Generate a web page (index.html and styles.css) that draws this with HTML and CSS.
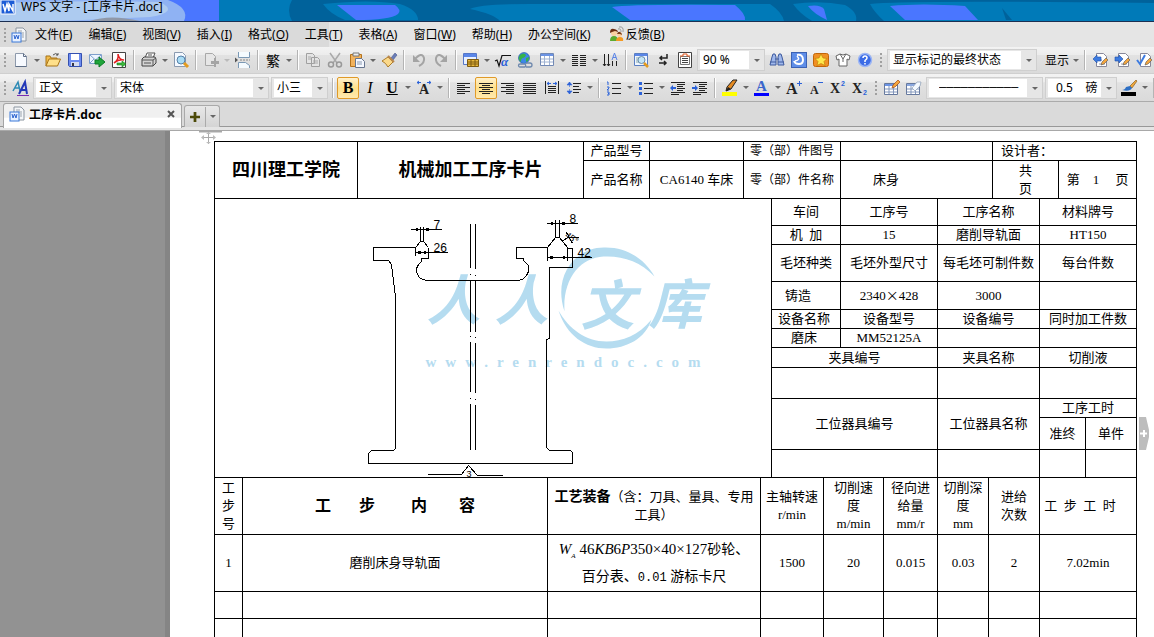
FILE: index.html
```
<!DOCTYPE html>
<html lang="zh-CN">
<head>
    <meta charset="UTF-8">
    <meta name="viewport" content="width=device-width, initial-scale=1.0">
    <title>WPS 文字 - [工序卡片.doc]</title>
    <link rel="stylesheet" href="styles.css">
</head>
<body>
    <header class="titlebar">
        <svg class="titlebar-bg" viewBox="0 0 1154 21" preserveAspectRatio="none" aria-hidden="true">
            <rect width="1154" height="21" fill="#00629b"/>
            <path d="M215 0H292Q286 10 292 21H215z" fill="#007ab8"/>
            <path d="M0 0H219V21H0z" fill="#4a76ff"/>
            <path d="M0 0H168Q190 8 184 21H0z" fill="#8fb2f3"/>
            <path d="M0 3Q80 0 160 2Q180 12 150 17L60 21H0z" fill="#adcbf0"/>
            <path d="M90 21Q110 14 140 21z" fill="#8f98a8"/>
            <path d="M323 4Q370 -1 400 4Q418 10 418 20H345Q330 14 323 4z" fill="#007ab8"/>
            <path d="M337 5H395Q402 10 398 14Q390 20 356 20Z" fill="#4a76ff"/>
            <path d="M470 9Q480 4 530 4H770Q782 12 784 21H500Q494 14 470 9z" fill="#007ab8"/>
            <path d="M612 7Q630 4 735 5Q746 14 745 20H630z" fill="#4a76ff"/>
            <path d="M793 4Q820 0 845 5Q858 12 856 21H812Q800 14 793 4z" fill="#007ab8"/>
            <path d="M808 6Q820 4 824 9L827 20Q814 14 808 6z" fill="#4a76ff"/>
            <path d="M870 4Q900 0 1154 3V21H884Q874 12 870 4z" fill="#007ab8"/>
            <path d="M890 6Q920 3 965 6L978 20H905z" fill="#4a76ff"/>
            <path d="M1002 8L1012 20H1006z" fill="#00629b"/>
        </svg>
        <svg class="icon" viewBox="0 0 16 16" aria-hidden="true"><rect x="1" width="14" height="14" fill="#1c5cd6" stroke="#fff"/><path d="M3 4l2 7 2-7 2 7V4l4 7V4" fill="none" stroke="#fff" stroke-width="1.5"/></svg>
        <h1 class="title">WPS 文字 - [工序卡片.doc]</h1>
    </header>

    <nav class="menubar">
        <span class="grip"></span>
        <svg class="icon menu-doc" viewBox="0 0 16 16" aria-hidden="true"><path d="M5 1h7l3 3v10H5z" fill="#f4f6f8" stroke="#8b95a0"/><path d="M7 4h4M7 6h6M11 8h2M11 10h2" stroke="#9aa3ad"/><rect x="1" y="6" width="9" height="9" fill="#e8f1ff" stroke="#3b78d8"/><path d="M3 8l1 4 1.500-4 1.500 4 1-4" fill="none" stroke="#2a62cf"/></svg>
        <button class="menu" type="button">文件(<u>F</u>)</button>
        <button class="menu" type="button">编辑(<u>E</u>)</button>
        <button class="menu" type="button">视图(<u>V</u>)</button>
        <button class="menu" type="button">插入(<u>I</u>)</button>
        <button class="menu" type="button">格式(<u>O</u>)</button>
        <button class="menu" type="button">工具(<u>T</u>)</button>
        <button class="menu" type="button">表格(<u>A</u>)</button>
        <button class="menu" type="button">窗口(<u>W</u>)</button>
        <button class="menu" type="button">帮助(<u>H</u>)</button>
        <button class="menu" type="button">办公空间(<u>K</u>)</button>
        <button class="menu menu-icon" type="button">
            <svg class="icon" viewBox="0 0 16 16" aria-hidden="true"><path d="M9 3q3-1 3 3M10 1q5-1 4 5" fill="none" stroke="#999"/><path d="M1 15q0-5 4-5t4 5z" fill="#5cab2f"/><circle cx="5" cy="7" r="3" fill="#fbd0a0"/><path d="M1 7q0-5 4-4t4 3l-3-1-3 1z" fill="#6b2d12"/><path d="M7 15q0-4 4-4t3 4z" fill="#f49a22"/><circle cx="10.500" cy="8.500" r="2.500" fill="#fbd0a0"/><path d="M8 8q1-3 3-2t2 3l-2-1z" fill="#7a3b18"/></svg>
            <span>反馈(<u>B</u>)</span>
        </button>
    </nav>

    <div class="toolbar">
        <span class="grip"></span>
        <button class="tool" type="button" aria-label="新建"><svg class="icon" viewBox="0 0 16 16"><path d="M2.500 1.500h8l3 3v10h-11z" fill="#f7faff" stroke="#8d99ab"/><path d="M10.500 1.500v3h3M13.500 14.500h-11" fill="none" stroke="#5f6e86"/></svg></button><button class="drop" type="button" aria-label="新建选项"></button>
        <button class="tool" type="button" aria-label="打开"><svg class="icon" viewBox="0 0 16 16"><path d="M1 14V4h4l1 2h6v3" fill="#f2bd4c" stroke="#a87418"/><path d="M1 14l3-7h11.500l-3 7z" fill="#ffe08a" stroke="#a87418"/><path d="M8 3q3-3 5 0m0 0V1m0 2h-2" fill="none" stroke="#555"/></svg></button>
        <button class="tool" type="button" aria-label="保存"><svg class="icon" viewBox="0 0 16 16"><path d="M1.500 1.500h13v13h-12l-1-1z" fill="#6d8cf0" stroke="#3450b0"/><path d="M4 2h8v6H4z" fill="#fff"/><path d="M4 10h8v4H4z" fill="#d5dcef"/><path d="M5 11h2v3H5z" fill="#334"/></svg></button>
        <button class="tool" type="button" aria-label="发送"><svg class="icon" viewBox="0 0 16 16"><path d="M.5 2.500h12v9H.5z" fill="#eef5ff" stroke="#7fa0cc"/><path d="M1 3l5.500 5L12 3M1 11l4-4" fill="none" stroke="#7fa0cc"/><path d="M6 8h4V5l6 5-6 5v-3H6z" fill="#1fa53a" stroke="#0c7a26"/></svg></button>
        <button class="tool" type="button" aria-label="输出为PDF"><svg class="icon" viewBox="0 0 16 16"><path d="M1.500.5h13v15h-13z" fill="#fff" stroke="#444"/><path d="M3 11q5-3 4-9 1 6 6 6-5-1-10 3" fill="none" stroke="#e02020" stroke-width="1.500"/><path d="M6 11h5V9l4 3-4 3v-2H6z" fill="#3cba3c" stroke="#147a1c" stroke-width=".6"/></svg></button>
        <span class="sep"></span>
        <button class="tool" type="button" aria-label="打印"><svg class="icon" viewBox="0 0 16 16"><path d="M4 6l2-5h8l-2 5z" fill="#fff" stroke="#555"/><path d="M1 7l2-2h11l1 2v4l-3 3H1z" fill="#d4d4d4" stroke="#444"/><path d="M1 8h11v6M12 8l3-2M3 11h7M7 3h4" fill="none" stroke="#555"/></svg></button><button class="drop" type="button" aria-label="打印选项"></button>
        <button class="tool" type="button" aria-label="打印预览"><svg class="icon" viewBox="0 0 16 16"><path d="M1.500.5h8l3 3v11h-11z" fill="#f5f9ff" stroke="#8a9ab0"/><circle cx="8" cy="8" r="4" fill="#a9dcf5" stroke="#5580a8"/><path d="M11 11l4 4" stroke="#e39b1f" stroke-width="3"/></svg></button>
        <span class="sep"></span>
        <button class="tool" type="button" aria-label="插入"><svg class="icon" viewBox="0 0 16 16"><path d="M2.500 1.500h7l3 3v9h-10z" fill="#e6e6e6" stroke="#a8a8a8"/><path d="M8 9h3V6h2v3h3v3h-3v3h-2v-3H8z" fill="#a5a5a5"/></svg></button><button class="drop dim-drop" type="button" aria-label="插入选项"></button>
        <button class="tool" type="button" aria-label="分页符"><svg class="icon" viewBox="0 0 16 16"><path d="M3.500 0v5.500h11V0M3.500 16v-5.500h7l4 3V16" fill="#f5fbff" stroke="#7b99b5"/><path d="M0 5.500v5l3-2.500z" fill="#555"/><path d="M5 8h10" stroke="#888" stroke-dasharray="2 1"/></svg></button>
        <span class="sep"></span>
        <button class="tool glyph" type="button">繁</button><button class="drop" type="button" aria-label="繁简转换选项"></button>
        <span class="sep"></span>
        <button class="tool" type="button" aria-label="复制"><svg class="icon" viewBox="0 0 16 16"><path d="M1.500 1.500h6l2 2v8h-8zM6.500 5.500h6l2 2v7h-8z" fill="#e4e4e4" stroke="#a0a0a0"/><path d="M3 5h3M3 7h3M8 9h5M8 11h5" stroke="#aaa"/></svg></button>
        <button class="tool" type="button" aria-label="剪切"><svg class="icon" viewBox="0 0 16 16"><path d="M3 1l7 10M13 1L6 11" stroke="#aaa" stroke-width="1.500"/><circle cx="4" cy="12.500" r="2.500" fill="none" stroke="#999" stroke-width="1.500"/><circle cx="12" cy="12.500" r="2.500" fill="none" stroke="#999" stroke-width="1.500"/></svg></button>
        <button class="tool" type="button" aria-label="粘贴"><svg class="icon" viewBox="0 0 16 16"><path d="M1.500 2.500h11v12h-11z" fill="#f2b25c" stroke="#b4731c"/><path d="M4 1h6v3H4z" fill="#eee" stroke="#777"/><path d="M6.500 6.500h6l3 3v6h-9z" fill="#f5f8ff" stroke="#66758e"/><path d="M8 10h5M8 12h5" stroke="#8899b0"/></svg></button><button class="drop" type="button" aria-label="粘贴选项"></button>
        <button class="tool" type="button" aria-label="格式刷"><svg class="icon" viewBox="0 0 16 16"><path d="M10 6l4-5 2 2-4 5z" fill="#6a7db8" stroke="#49588c" stroke-width=".6"/><path d="M1 9l6-4 5 5-5 5q-2-4-6-6z" fill="#fbd98a" stroke="#ad7c29"/><path d="M7 4l6 6" stroke="#b9874c" stroke-width="2"/></svg></button>
        <span class="sep"></span>
        <button class="tool" type="button" aria-label="撤消"><svg class="icon" viewBox="0 0 16 16"><path d="M3 8q8-9 10-2 1 5-5 8" fill="none" stroke="#a4a4a4" stroke-width="2"/><path d="M2 3v7h7z" fill="#a4a4a4"/></svg></button>
        <button class="tool" type="button" aria-label="恢复"><svg class="icon" viewBox="0 0 16 16"><path d="M13 8Q5-1 3 6q-1 5 5 8" fill="none" stroke="#a4a4a4" stroke-width="2"/><path d="M14 3v7H7z" fill="#a4a4a4"/></svg></button>
        <span class="sep"></span>
        <button class="tool" type="button" aria-label="表格和边框"><svg class="icon" viewBox="0 0 16 16"><path d="M.5 1.500h13v11H.5z" fill="#e8f0ff" stroke="#5577c8"/><path d="M1 2h12v3H1z" fill="#5a86e8"/><path d="M4.500 7.500h11v7h-11z" fill="#e8b93c" stroke="#7c5a10"/><path d="M5 10h10M5 12h10M8 8v6M12 8v6" stroke="#7c5a10"/></svg></button><button class="drop" type="button" aria-label="边框选项"></button>
        <button class="tool" type="button" aria-label="公式"><svg class="icon" viewBox="0 0 16 16"><path d="M0 9l2-1 2 6L7 3.500h9" fill="none" stroke="#111" stroke-width="1.200"/><text class="svg-alpha" x="6" y="14">α</text></svg></button>
        <button class="tool" type="button" aria-label="超链接"><svg class="icon" viewBox="0 0 16 16"><circle cx="7" cy="6" r="5.500" fill="#3c87e8" stroke="#1c4f9c" stroke-width=".6"/><path d="M3 3q4-3 6 0-1 3-3 3t-2 4Q0 7 3 3zM9 6l3-1q0 4-3 5z" fill="#35b24a"/><path d="M3 12h5a2 2 0 010 3H3a1.500 1.500 0 010-3zM9 11h4a2 2 0 010 4H9" fill="none" stroke="#6e88ad" stroke-width="1.300"/></svg></button>
        <button class="tool" type="button" aria-label="插入表格"><svg class="icon" viewBox="0 0 16 16"><path d="M1.500 1.500h13v12h-13z" fill="#fff" stroke="#7289b5"/><path d="M2 2h12v2H2z" fill="#6b93e4"/><path d="M2 7h12M2 10h12M5.500 4v9M10.500 4v9" stroke="#9fb2d2"/></svg></button><button class="drop" type="button" aria-label="插入表格选项"></button>
        <button class="tool" type="button" aria-label="分栏"><svg class="icon" viewBox="0 0 16 16"><path d="M1 3.500h6M1 5.500h6M1 7.500h6M1 9.500h6M1 11.500h6M1 13.500h6M9 3.500h6M9 5.500h6M9 7.500h6M9 9.500h6M9 11.500h6M9 13.500h6" stroke="#222"/></svg></button><button class="drop" type="button" aria-label="分栏选项"></button>
        <button class="tool" type="button" aria-label="文字方向"><svg class="icon" viewBox="0 0 16 16"><path d="M1.500 2v12M5.500 2v12M9.500 9v5M13.500 9v5M0 12l1.500 2L3 12M4 12l1.500 2L7 12" fill="none" stroke="#222"/><path d="M9 8l2.500-7L14 8M10 5.500h3" fill="none" stroke="#5a84e8"/></svg></button>
        <span class="sep"></span>
        <button class="tool" type="button" aria-label="阅读"><svg class="icon" viewBox="0 0 16 16"><path d="M1.500 1.500h13v12h-13z" fill="#f0f6ff" stroke="#5b7fc2"/><path d="M2 2h12v2H2z" fill="#5a86e8"/><path d="M3 6h4M3 8h3M3 10h4" stroke="#8aa"/><circle cx="8.500" cy="8" r="3.500" fill="#c5e6f7" stroke="#6b8cab"/><path d="M11 11l4 4" stroke="#e39b1f" stroke-width="2.500"/></svg></button>
        <button class="tool" type="button" aria-label="显示编辑标记"><svg class="icon" viewBox="0 0 16 16"><path d="M12 2v4H5m2-2L5 6l2 2M4 11h7m-2-2l2 2-2 2" fill="none" stroke="#222" stroke-width="1.500"/></svg></button>
        <button class="tool" type="button" aria-label="页面视图"><svg class="icon" viewBox="0 0 16 16"><path d="M1.500.5h13v15h-13z" fill="#fff" stroke="#444"/><path d="M3.500 4.500h9v8h-9z" fill="none" stroke="#777"/><path d="M5 6.500h6M5 8.500h6M5 10.500h6" stroke="#444"/><path d="M3 4h3V2h4v2h3" fill="none" stroke="#e0571c"/></svg></button>
        <span class="combo combo-zoom"><select aria-label="显示比例"><option>90 %</option><option>100 %</option></select></span>
        <button class="tool" type="button" aria-label="查找"><svg class="icon" viewBox="0 0 16 16"><path d="M1 13l2-8 1-3h2l1 3v8zM9 13V5l1-3h2l1 3 2 8z" fill="#9fb8ec" stroke="#3f5b9e"/><path d="M6 7h4M1 10h6M9 10h6" stroke="#3f5b9e"/></svg></button>
        <button class="tool" type="button" aria-label="在线素材"><svg class="icon" viewBox="0 0 16 16"><rect x=".5" y=".5" width="15" height="15" fill="#5f8ee8" stroke="#3c62b4"/><path d="M6 3q6-1 6 5 0 4-4 4-4 0-5-3" fill="none" stroke="#fff" stroke-width="2"/><path d="M6 4q4 4-2 5" fill="none" stroke="#fff" stroke-width="1.500"/></svg></button>
        <button class="tool" type="button" aria-label="收藏"><svg class="icon" viewBox="0 0 16 16"><rect x=".5" y="1.500" width="15" height="13" rx="2" fill="#f09024" stroke="#c26508"/><path d="M8 2l2 4 4 .5-3 3 1 4-4-2-4 2 1-4-3-3L6 6z" fill="#ffe84d" stroke="#b97a00" stroke-width=".6"/></svg></button>
        <button class="tool" type="button" aria-label="皮肤"><svg class="icon" viewBox="0 0 16 16"><path d="M1 4l4-2q3 2 6 0l4 2-1 4-2-1v7H4V7L2 8z" fill="#fff" stroke="#666"/><path d="M5 2l3 5 3-5M8 7v3" fill="none" stroke="#666"/></svg></button>
        <button class="tool" type="button" aria-label="帮助"><svg class="icon" viewBox="0 0 16 16"><circle cx="8" cy="8" r="6.500" fill="#3c6ce6" stroke="#9cb6f5" stroke-width="1.500"/><path d="M6 6q0-2 2-2t2 2q0 1-2 2.500V10M8 11v1.500" fill="none" stroke="#fff" stroke-width="1.500"/></svg></button>
        <span class="grip"></span>
        <span class="combo combo-review"><select aria-label="审阅显示"><option>显示标记的最终状态</option><option>原始状态</option></select></span>
        <button class="tool-text" type="button">显示</button><button class="drop" type="button" aria-label="显示选项"></button>
        <span class="sep"></span>
        <button class="tool" type="button" aria-label="前一处修订"><svg class="icon" viewBox="0 0 16 16"><path d="M4.500 1.500h7l3 3v10h-10z" fill="#fff" stroke="#889"/><path d="M7 8h3M7 12h6" stroke="#99a"/><path d="M1 7l4-4v2h4v4H5v2z" fill="#3d7be0" stroke="#1c4fa8" stroke-width=".6"/><path d="M9 13l1-3 4-4 2 2-4 4z" fill="#f4a53c" stroke="#555" stroke-width=".6"/></svg></button>
        <button class="tool" type="button" aria-label="后一处修订"><svg class="icon" viewBox="0 0 16 16"><path d="M4.500 1.500h7l3 3v10h-10z" fill="#fff" stroke="#889"/><path d="M7 12h6" stroke="#99a"/><path d="M9 7L5 3v2H1v4h4v2z" fill="#3d7be0" stroke="#1c4fa8" stroke-width=".6"/><path d="M9 13l1-3 4-4 2 2-4 4z" fill="#f4a53c" stroke="#555" stroke-width=".6"/></svg></button>
        <button class="tool" type="button" aria-label="接受修订"><svg class="icon" viewBox="0 0 16 16"><path d="M4.500 1.500h7l3 3v10h-10z" fill="#fff" stroke="#889"/><path d="M1 8l3 4 5-9" fill="none" stroke="#3d7be0" stroke-width="2"/><path d="M9 13l1-3 4-4 2 2-4 4z" fill="#f4a53c" stroke="#555" stroke-width=".6"/></svg></button>
    </div>

    <div class="toolbar toolbar-format">
        <span class="grip"></span>
        <button class="tool" type="button" aria-label="样式和格式"><svg class="icon" viewBox="0 0 16 16"><path d="M0 11L5 2l2 9M2 8h4" fill="none" stroke="#2c8ab5" stroke-width="1.500"/><path d="M6 14l6-12 2 12M8 10h5" fill="none" stroke="#2338b8" stroke-width="2"/><path d="M4 15.500h12" stroke="#7b2bb0"/></svg></button>
        <span class="combo combo-style"><select aria-label="样式"><option>正文</option></select></span>
        <span class="combo combo-font"><select aria-label="字体"><option>宋体</option></select></span>
        <span class="combo combo-size"><select aria-label="字号"><option>小三</option></select></span>
        <span class="sep"></span>
        <button class="tool serif active" type="button"><b>B</b></button>
        <button class="tool serif" type="button"><i>I</i></button>
        <button class="tool serif" type="button"><b><u>U</u></b></button><button class="drop" type="button" aria-label="下划线选项"></button>
        <button class="tool" type="button" aria-label="字符缩放"><svg class="icon" viewBox="0 0 16 16"><path d="M1 2.500h4M11 2.500h4M3 1L1 2.500 3 4M13 1l2 1.500L13 4" fill="none" stroke="#2b62d9"/><text class="svg-serif" x="3" y="14">A</text></svg></button><button class="drop" type="button" aria-label="字符缩放选项"></button>
        <span class="sep"></span>
        <button class="tool" type="button" aria-label="左对齐"><svg class="icon" viewBox="0 0 16 16"><path d="M1 3.500h13M1 5.500h8M1 7.500h13M1 9.500h8M1 11.500h13M1 13.500h8" stroke="#222"/></svg></button>
        <button class="tool active" type="button" aria-label="居中对齐"><svg class="icon" viewBox="0 0 16 16"><path d="M1 3.500h14M4 5.500h8M1 7.500h14M4 9.500h8M1 11.500h14M4 13.500h8" stroke="#222"/></svg></button>
        <button class="tool" type="button" aria-label="右对齐"><svg class="icon" viewBox="0 0 16 16"><path d="M1 3.500h13M6 5.500h8M1 7.500h13M6 9.500h8M1 11.500h13M6 13.500h8" stroke="#222"/></svg></button>
        <button class="tool" type="button" aria-label="两端对齐"><svg class="icon" viewBox="0 0 16 16"><path d="M1 3.500h13M1 5.500h13M1 7.500h13M1 9.500h13M1 11.500h13M1 13.500h13" stroke="#222"/></svg></button>
        <button class="tool" type="button" aria-label="分散对齐"><svg class="icon" viewBox="0 0 16 16"><path d="M1.500 1v13M14.500 1v13M4 6.500h8M4 8.500h8M4 10.500h8M4 12.500h8" stroke="#222"/><path d="M3 3.500h4M9 3.500h4M5 2L3 3.500 5 5M11 2l2 1.500L11 5" fill="none" stroke="#2b62d9"/></svg></button>
        <button class="tool" type="button" aria-label="行距"><svg class="icon" viewBox="0 0 16 16"><path d="M7 3.500h8M7 6.500h6M7 9.500h8M7 12.500h6" stroke="#222"/><path d="M3.500 2v5M1 5l2.500-3L6 5zM3.500 9v5M1 11l2.500 3L6 11z" fill="#2b62d9" stroke="#2b62d9" stroke-width=".6"/></svg></button><button class="drop" type="button" aria-label="行距选项"></button>
        <span class="sep"></span>
        <button class="tool" type="button" aria-label="编号"><svg class="icon" viewBox="0 0 16 16"><path d="M6 3.500h9M6 8.500h9M6 13.500h9" stroke="#222"/><path d="M1 2h1v3M1 7h2v1L1 10h2M1 12h2v3H1M2 13.500h1" fill="none" stroke="#2b62d9"/></svg></button><button class="drop" type="button" aria-label="编号选项"></button>
        <button class="tool" type="button" aria-label="项目符号"><svg class="icon" viewBox="0 0 16 16"><path d="M6 3.500h9M6 8.500h9M6 13.500h9" stroke="#222"/><path d="M1 2h3v3H1zM1 7h3v3H1zM1 12h3v3H1z" fill="#2b62d9"/></svg></button><button class="drop" type="button" aria-label="项目符号选项"></button>
        <button class="tool" type="button" aria-label="减少缩进"><svg class="icon" viewBox="0 0 16 16"><path d="M1 2.500h14M7 4.500h8M7 6.500h6M7 8.500h8M7 10.500h6M1 12.500h14M1 14.500h8" stroke="#222"/><path d="M0 8l3-3v2h3v2H3v2z" fill="#2b62d9"/></svg></button>
        <button class="tool" type="button" aria-label="增加缩进"><svg class="icon" viewBox="0 0 16 16"><path d="M1 2.500h14M7 4.500h8M7 6.500h6M7 8.500h8M7 10.500h6M1 12.500h14M1 14.500h8" stroke="#222"/><path d="M6 8L3 5v2H0v2h3v2z" fill="#2b62d9"/></svg></button>
        <span class="sep"></span>
        <button class="tool" type="button" aria-label="突出显示"><svg class="icon" viewBox="0 0 16 16"><path d="M0 12h15v4H0z" fill="#ff0"/><path d="M4 11l1-4 6-7h4l-6 9z" fill="#e48a22" stroke="#222"/><path d="M4 11l2-4 3 2z" fill="#222"/></svg></button><button class="drop" type="button" aria-label="突出显示选项"></button>
        <button class="tool" type="button" aria-label="字体颜色"><svg class="icon" viewBox="0 0 16 16"><path d="M0 13h15v3H0z" fill="#00f"/><text class="svg-serif svg-blue" x="2" y="11">A</text></svg></button><button class="drop" type="button" aria-label="字体颜色选项"></button>
        <button class="tool" type="button" aria-label="增大字号"><svg class="icon" viewBox="0 0 16 16"><text class="svg-serif svg-big" x="0" y="14">A</text><path d="M11 3.500h5M13.500 1v5" stroke="#2b62d9"/></svg></button>
        <button class="tool" type="button" aria-label="减小字号"><svg class="icon" viewBox="0 0 16 16"><text class="svg-serif svg-small" x="2" y="14">A</text><path d="M10 2.500h5" stroke="#2b62d9"/></svg></button>
        <button class="tool" type="button" aria-label="上标"><svg class="icon" viewBox="0 0 16 16"><text class="svg-serif" x="0" y="13">X</text><text class="svg-sup" x="11" y="6">2</text></svg></button>
        <button class="tool" type="button" aria-label="下标"><svg class="icon" viewBox="0 0 16 16"><text class="svg-serif" x="0" y="13">X</text><text class="svg-sup" x="11" y="15">2</text></svg></button>
        <span class="grip"></span>
        <button class="tool" type="button" aria-label="绘制表格"><svg class="icon" viewBox="0 0 16 16"><path d="M.5 3.500h13v11H.5z" fill="#fff" stroke="#66799e"/><path d="M1 4h12v2H1z" fill="#6b93e4"/><path d="M1 9h12M1 12h12M5 6v8M9.500 6v8" stroke="#8397bc"/><path d="M8 8l1-3 5-5 2 2-5 5z" fill="#f4a53c" stroke="#a04a18" stroke-width=".7"/></svg></button>
        <button class="tool" type="button" aria-label="擦除"><svg class="icon" viewBox="0 0 16 16"><path d="M.5 3.500h13v11H.5z" fill="#fff" stroke="#66799e"/><path d="M1 4h12v2H1z" fill="#8aa8e0"/><path d="M1 9h12M1 12h12M5 6v8M9.500 6v8" stroke="#8397bc"/><path d="M6 8l5-6h4l-1 4-5 5z" fill="#f4f9ff" stroke="#8a9cb5" stroke-width=".7"/></svg></button>
        <span class="combo combo-line"><select aria-label="线型"><option>───────────</option></select></span>
        <span class="combo combo-weight"><select aria-label="粗细"><option>0.5 &nbsp; &nbsp;磅</option></select></span>
        <button class="tool" type="button" aria-label="边框颜色"><svg class="icon" viewBox="0 0 16 16"><path d="M0 12h15v4H0z" fill="#000"/><path d="M9 6l6-6 1 1-5 7z" fill="#f0a83c" stroke="#7a5110" stroke-width=".6"/><path d="M1 10q3 0 4-3l4-1 2 2q-2 4-10 2z" fill="#2d6fc4"/></svg></button><button class="drop" type="button" aria-label="边框颜色选项"></button>
        <span class="sep"></span>
    </div>

    <div class="tabs">
        <div class="tab">
            <svg class="icon" viewBox="0 0 16 16" aria-hidden="true"><path d="M5 1h7l3 3v10H5z" fill="#f4f6f8" stroke="#8b95a0"/><path d="M7 4h4M7 6h6M11 8h2M11 10h2" stroke="#9aa3ad"/><rect x="1" y="6" width="9" height="9" fill="#e8f1ff" stroke="#3b78d8"/><path d="M3 8l1 4 1.500-4 1.500 4 1-4" fill="none" stroke="#2a62cf"/></svg>
            <span class="tab-name">工序卡片.doc</span>
            <button class="tab-close" type="button" aria-label="关闭"><svg viewBox="0 0 8 8"><path d="M1 1l6 6M7 1L1 7" stroke="#555" stroke-width="2"/></svg></button>
        </div>
        <div class="tab-new">
            <button class="tab-add" type="button" aria-label="新建标签"><svg viewBox="0 0 11 11"><path d="M5.500 0v11M0 5.500h11" stroke="#4c4a08" stroke-width="3"/></svg></button>
            <button class="drop" type="button" aria-label="标签选项"></button>
        </div>
    </div>

    <main class="workspace">
        <div class="page">
            <svg class="move-handle" viewBox="0 0 24 14" aria-hidden="true"><path d="M0 .5h23" stroke="#a8a8a8" stroke-width="2"/><path d="M9.500 1v12M3 6.500h13" stroke="#aaa"/><path d="M7 3l2.500-2L12 3zM7 11l2.500 2 2.500-2zM5 4L2 6.500 5 9zM14 4l3 2.500L14 9z" fill="#bbb"/></svg>
            <table class="card">
                <colgroup>
                    <col class="w28"><col class="w115"><col class="w190"><col class="w36"><col class="w66"><col class="w94">
                    <col class="w17"><col class="w11"><col class="w52"><col class="w17"><col class="w43"><col class="w54">
                    <col class="w51"><col class="w4"><col class="w47"><col class="w19"><col class="w27"><col class="w51">
                </colgroup>
                <tbody>
                    <tr class="h19">
                        <th class="heading" rowspan="2" colspan="2">四川理工学院</th>
                        <th class="heading" rowspan="2" colspan="2">机械加工工序卡片</th>
                        <td>产品型号</td>
                        <td></td>
                        <td class="narrow" colspan="4">零（部）件图号</td>
                        <td colspan="4"></td>
                        <td class="left" colspan="4">设计者：</td>
                    </tr>
                    <tr class="h38">
                        <td>产品名称</td>
                        <td>CA6140 车床</td>
                        <td class="narrow" colspan="4">零（部）件名称</td>
                        <td class="left indent" colspan="4">床身</td>
                        <td colspan="2">共<br>页</td>
                        <td class="pre" colspan="2">第    1     页</td>
                    </tr>
                    <tr class="h27">
                        <td class="sketch" rowspan="11" colspan="8">
                            <svg viewBox="214.500 198.500 556 278" preserveAspectRatio="xMinYMin meet" role="img">
                                <g class="mark">
                                    <text class="mark-char" x="426" y="319">人</text>
                                    <text class="mark-char" x="494" y="319">人</text>
                                    <text class="mark-char" x="580" y="324">文</text>
                                    <text class="mark-char" x="648" y="323">库</text>
                                    <path d="M564 311C552 275 575 247 603 247 628 246 646 261 654 276 640 261 622 255 603 256 580 257 562 278 564 311z"/>
                                    <path d="M558 310C566 335 585 348 606 348 626 348 645 338 651 319 638 335 622 341 606 341 585 341 568 328 558 310z"/>
                                    <text class="mark-url" x="425" y="366">www.renrendoc.com</text>
                                </g>
                                <g class="lines">
                                    <!-- bed outline -->
                                    <path d="M415 247H373V260H388L391 264 395 297V448L393 450H371L368 453V463H572V452L570 450H549L546 447V339L549 338V267H572V248H567"/>
                                    <path d="M428 247V258H421V261L418 264 416 268V272L419 277 422 279 427 280H517L522 279 526 275 528 271V265L525 262 523 260V258H516V247H547"/>
                                    <path d="M415 255V247L420 241H423L428 247M547 260V247L555 237H559L567 247V260"/>
                                    <!-- centre lines -->
                                    <path d="M470 223V267M470 273V274M470 280V331M470 335V336M470 341V391M470 397V398M470 403V449"/>
                                    <path d="M475 223V268M475 274V275M475 280V331M475 336V337M475 342V392M475 398V399M475 404V449"/>
                                    <!-- dimensions -->
                                    <path d="M420 226V241M423 226V241M410 229H441M415 252H447M555 219V237M559 219V237M546 223H577M547 257H591M563 240L567 237H578M566 232L572 243"/>
                                    <path d="M427 474H461L468 465 477 475H502"/>
                                    <path class="tip" d="M420 229l-5-2v4zM423 229l5-2v4zM415 252l5-2v4zM428 252l-5-2v4zM555 223l-5-2v4zM559 223l5-2v4zM547 257l5-2v4zM567 257l-5-2v4z"/>
                                </g>
                                <text class="dim" x="433" y="228">7</text>
                                <text class="dim" x="433" y="251">26</text>
                                <text class="dim" x="569" y="222">8</text>
                                <text class="dim" x="577" y="256">42</text>
                                <text class="dim dim-small" transform="translate(564 236) rotate(35)">45°</text>
                                <text class="dim dim-small" x="466" y="476">3</text>
                            </svg>
                        </td>
                        <td colspan="2">车间</td>
                        <td colspan="2">工序号</td>
                        <td colspan="3">工序名称</td>
                        <td colspan="3">材料牌号</td>
                    </tr>
                    <tr class="h19">
                        <td class="pre" colspan="2">机  加</td>
                        <td colspan="2">15</td>
                        <td colspan="3">磨削导轨面</td>
                        <td colspan="3">HT150</td>
                    </tr>
                    <tr class="h37">
                        <td colspan="2">毛坯种类</td>
                        <td colspan="2">毛坯外型尺寸</td>
                        <td colspan="3">每毛坯可制件数</td>
                        <td colspan="3">每台件数</td>
                    </tr>
                    <tr class="h28">
                        <td class="shift" colspan="2">铸造</td>
                        <td colspan="2">2340<span class="han">×</span>428</td>
                        <td colspan="3">3000</td>
                        <td colspan="3"></td>
                    </tr>
                    <tr class="h19">
                        <td class="shift-sm" colspan="2">设备名称</td>
                        <td colspan="2">设备型号</td>
                        <td colspan="3">设备编号</td>
                        <td colspan="3">同时加工件数</td>
                    </tr>
                    <tr class="h19">
                        <td class="shift-sm" colspan="2">磨床</td>
                        <td colspan="2">MM52125A</td>
                        <td colspan="3"></td>
                        <td colspan="3"></td>
                    </tr>
                    <tr class="h20">
                        <td colspan="4">夹具编号</td>
                        <td colspan="3">夹具名称</td>
                        <td colspan="3">切削液</td>
                    </tr>
                    <tr class="h31">
                        <td colspan="4"></td>
                        <td colspan="3"></td>
                        <td colspan="3"></td>
                    </tr>
                    <tr class="h19">
                        <td rowspan="2" colspan="4">工位器具编号</td>
                        <td rowspan="2" colspan="3">工位器具名称</td>
                        <td colspan="3">工序工时</td>
                    </tr>
                    <tr class="h32">
                        <td colspan="2">准终</td>
                        <td>单件</td>
                    </tr>
                    <tr class="h28">
                        <td colspan="4"></td>
                        <td colspan="3"></td>
                        <td colspan="2"></td>
                        <td></td>
                    </tr>
                    <tr class="h57">
                        <td>工<br>步<br>号</td>
                        <th class="subheading pre" colspan="2">工       步         内        容</th>
                        <td class="equipment" colspan="4"><b class="lead">工艺装备</b>（含：刀具、量具、专用工具）</td>
                        <td colspan="2">主轴转速<br>r/min</td>
                        <td colspan="2">切削速<br>度<br>m/min</td>
                        <td>径向进<br>给量<br>mm/r</td>
                        <td>切削深<br>度<br>mm</td>
                        <td colspan="2">进给<br>次数</td>
                        <td class="pre shift" colspan="3">工  步  工  时</td>
                    </tr>
                    <tr class="h57">
                        <td>1</td>
                        <td colspan="2">磨削床身导轨面</td>
                        <td class="tooling" colspan="4"><span class="formula"><i>W<sub>A</sub></i> 46<i>KB</i>6<i>P</i>350×40×127</span>砂轮、<br>百分表、<span class="mono">0.01</span> 游标卡尺</td>
                        <td colspan="2">1500</td>
                        <td colspan="2">20</td>
                        <td>0.015</td>
                        <td>0.03</td>
                        <td colspan="2">2</td>
                        <td colspan="3">7.02min</td>
                    </tr>
                    <tr class="h27">
                        <td></td>
                        <td colspan="2"></td>
                        <td colspan="4"></td>
                        <td colspan="2"></td>
                        <td colspan="2"></td>
                        <td></td>
                        <td></td>
                        <td colspan="2"></td>
                        <td colspan="3"></td>
                    </tr>
                    <tr class="h27">
                        <td></td>
                        <td colspan="2"></td>
                        <td colspan="4"></td>
                        <td colspan="2"></td>
                        <td colspan="2"></td>
                        <td></td>
                        <td></td>
                        <td colspan="2"></td>
                        <td colspan="3"></td>
                    </tr>
                </tbody>
            </table>
            <button class="add-column" type="button" aria-label="添加列"><svg viewBox="0 0 10 33"><path d="M0 0h7l3 13v7L7 33H0z" fill="#bdbdbd"/><path d="M5 13v7M1 16.500h7" stroke="#fff" stroke-width="2"/></svg></button>
        </div>
    </main>
</body>
</html>
```
FILE: styles.css
```
* {
    box-sizing: border-box;
}

body {
    margin: 0;
    height: 100vh;
    overflow: hidden;
    display: flex;
    flex-direction: column;
    font-family: "Noto Sans", "Noto Sans CJK SC", sans-serif;
    font-size: 12px;
    color: #000;
    background-color: #dadada;
}

button {
    font: inherit;
    color: inherit;
    padding: 0;
    border: none;
    background: none;
    flex: none;
}

.icon {
    width: 16px;
    height: 16px;
    flex: none;
    display: block;
    overflow: visible;
}

/* Barre de titre */
.titlebar {
    position: relative;
    flex: none;
    height: 22px;
    display: flex;
    align-items: flex-start;
    border-bottom: 1px solid #1b2f52;
}

.titlebar-bg {
    position: absolute;
    left: 0;
    top: 0;
    width: 100%;
    height: 100%;
}

.titlebar .icon {
    position: relative;
}

.title {
    position: relative;
    margin: 0 0 0 5px;
    font-size: 12px;
    font-weight: normal;
    line-height: 14px;
    white-space: pre;
}

/* Menus */
.menubar {
    flex: none;
    height: 25px;
    display: flex;
    align-items: center;
    background: linear-gradient(to right, #dadada 329px, #e5e5e5 329px);
}

.menu {
    height: 24px;
    padding: 0 8px 2px;
    white-space: nowrap;
}

.menu-doc {
    margin: 0 0 0 1px;
}

.menu-icon {
    display: flex;
    align-items: center;
    padding: 0 10px 2px;
    gap: 1px;
}

/* Barres d'outils */
.toolbar {
    flex: none;
    height: 27px;
    display: flex;
    align-items: center;
    background: linear-gradient(#f3f3f3, #ececec 30%, #e2e2e2 32%, #dadada);
    border-bottom: 1px solid #cfcfcf;
    white-space: nowrap;
}

.toolbar-format {
    height: 28px;
    border-bottom: 1px solid #ababab;
}

.grip {
    flex: none;
    width: 10px;
    height: 16px;
    background: radial-gradient(circle at 5px 2px, #a0a0a0 1px, transparent 1px) 0 0 / 10px 4px;
}

.sep {
    flex: none;
    width: 8px;
    height: 20px;
    background: linear-gradient(to right, transparent 3px, #b4b4b4 3px, #b4b4b4 4px, #fff 4px, #fff 5px, transparent 5px);
}

.tool {
    width: 22px;
    height: 22px;
    display: flex;
    align-items: center;
    justify-content: center;
}

.glyph {
    font-size: 14px;
}

.serif {
    font-family: "Liberation Serif", serif;
    font-size: 16px;
}

.active {
    border: 1px solid #e09a28;
    border-radius: 2px;
    background: linear-gradient(#fff0cc, #ffe08a 50%, #ffe9b0);
}

.tool-text {
    padding: 0 2px 0 7px;
}

.drop {
    width: 10px;
    height: 22px;
    display: flex;
    align-items: center;
    justify-content: center;
}

.drop::before,
.combo::after {
    content: "";
    border: 3px solid transparent;
    border-top-color: #666;
    border-bottom: none;
}

.dim-drop::before {
    border-top-color: #bbb;
}

.combo {
    position: relative;
    flex: none;
    height: 22px;
    margin: 0 1px;
    padding: 1px 15px 1px 2px;
    border: 1px solid #cfcfcf;
    background-color: #e6e6e6;
}

.combo::after {
    position: absolute;
    right: 4px;
    top: 9px;
}

.combo select {
    appearance: none;
    display: block;
    width: 100%;
    height: 18px;
    padding: 0 0 0 3px;
    border: none;
    border-radius: 0;
    background-color: #fff;
    color: #000;
    font: inherit;
    line-height: 18px;
}

.combo-zoom {
    width: 68px;
}

.combo-review {
    width: 150px;
}

.combo-style {
    width: 79px;
}

.combo-font {
    width: 155px;
}

.combo-size {
    width: 57px;
}

.combo-line {
    width: 117px;
}

.combo-line select {
    padding-left: 10px;
    font-family: "Liberation Mono", monospace;
}

.combo-weight {
    width: 72px;
}

.combo-weight select {
    padding-left: 8px;
}

.svg-alpha {
    font: italic bold 13px "Liberation Serif", serif;
    fill: #2b62d9;
}

.svg-serif {
    font: bold 14px "Liberation Serif", serif;
    fill: #222;
}

.svg-blue {
    font-size: 15px;
    fill: #3a66cc;
}

.svg-big {
    font-size: 16px;
}

.svg-small {
    font-size: 12px;
}

.svg-sup {
    font: bold 7px "Liberation Sans", sans-serif;
    fill: #2b62d9;
}

/* Onglets */
.tabs {
    flex: none;
    height: 29px;
    padding: 1px 3px 0;
    display: flex;
    align-items: flex-start;
    gap: 2px;
    background: linear-gradient(#dadada 24px, #989898 24px, #989898 25px, #e4e4e4 25px, #e4e4e4 28px, #a8a8a8 28px);
}

.tab {
    width: 179px;
    height: 25px;
    padding: 0 6px 4px 5px;
    display: flex;
    align-items: center;
    gap: 4px;
    border: 1px solid #a5a5a5;
    border-bottom: none;
    border-radius: 3px 3px 0 0;
    background: linear-gradient(#f0f0f0 55%, #fff 60%);
}

.tab-name {
    flex: 1;
    font-weight: bold;
}

.tab-close {
    width: 8px;
    height: 8px;
}

.tab-close svg,
.add-column svg,
.tab-add svg {
    display: block;
    width: 100%;
}

.tab-new {
    height: 22px;
    margin-top: 2px;
    display: flex;
    align-items: center;
    border: 1px solid #aaa;
    border-bottom: none;
    border-radius: 3px 3px 0 0;
    background: linear-gradient(#e8e8e8, #d4d4d4);
}

.tab-add {
    width: 21px;
    height: 20px;
    padding: 4px 5px;
    border-right: 1px solid #aaa;
}

.tab-new .drop {
    width: 13px;
}

/* Document */
.workspace {
    flex: 1;
    min-height: 0;
    display: flex;
    padding-left: 170px;
    background: linear-gradient(to right, #929292 165px, #858585 165px);
}

.page {
    position: relative;
    flex: 1;
    padding: 10px 17px 0 44px;
    background-color: #fff;
}

.move-handle {
    position: absolute;
    left: 29px;
    top: 0;
    width: 24px;
    height: 14px;
}

.add-column {
    position: absolute;
    right: 5px;
    top: 286px;
    width: 10px;
    height: 33px;
}

.card {
    width: 100%;
    table-layout: fixed;
    border-collapse: collapse;
    font-family: "Liberation Serif", "Noto Sans CJK SC", serif;
    font-size: 13px;
    line-height: 18px;
    text-align: center;
}

.card td,
.card th {
    padding: 0;
    border: 1px solid #000;
}

.w4 { width: 4px; }
.w11 { width: 11px; }
.w17 { width: 17px; }
.w19 { width: 19px; }
.w27 { width: 27px; }
.w28 { width: 28px; }
.w36 { width: 36px; }
.w43 { width: 43px; }
.w47 { width: 47px; }
.w51 { width: 51px; }
.w52 { width: 52px; }
.w54 { width: 54px; }
.w66 { width: 66px; }
.w94 { width: 94px; }
.w115 { width: 115px; }
.w190 { width: 190px; }

.h19 { height: 19px; }
.h20 { height: 20px; }
.h27 { height: 27px; }
.h28 { height: 28px; }
.h31 { height: 31px; }
.h32 { height: 32px; }
.h37 { height: 37px; }
.h38 { height: 38px; }
.h57 { height: 57px; }

.card .heading {
    font-size: 18px;
    font-weight: bold;
}

.card .subheading {
    font-size: 16px;
    font-weight: bold;
}

.card .narrow {
    font-size: 12px;
}

.card .left {
    padding-left: 8px;
    text-align: left;
}

.card .indent {
    padding-left: 32px;
}

.card .shift {
    padding-right: 16px;
}

.card .shift-sm {
    padding-right: 4px;
}

.card .pre {
    white-space: pre;
}

.card .equipment {
    padding: 0 6px;
}

.card .tooling {
    font-size: 14px;
    line-height: 27px;
}

.lead {
    font-size: 14px;
}

.formula {
    font-size: 15px;
}

.formula sub {
    font-size: 7px;
    line-height: 0;
}

.mono {
    font-family: "Liberation Mono", monospace;
    font-size: 12px;
    line-height: 12px;
}

.han {
    font-family: "Noto Sans CJK SC", sans-serif;
    line-height: 12px;
}

/* Croquis */
.sketch svg {
    display: block;
    width: 100%;
    height: 278px;
}

.lines {
    fill: none;
    stroke: #000;
    stroke-width: 1px;
    shape-rendering: crispEdges;
}

.tip {
    fill: #000;
    stroke: none;
}

.dim {
    font: 12px "Liberation Sans", sans-serif;
}

.dim-small {
    font-size: 9px;
}

.mark {
    fill: #b5dcf0;
}

.mark-char {
    font: italic bold 54px "Noto Sans CJK SC", sans-serif;
}

.mark-url {
    font: bold 15px "Liberation Serif", serif;
    letter-spacing: 9px;
}
```
